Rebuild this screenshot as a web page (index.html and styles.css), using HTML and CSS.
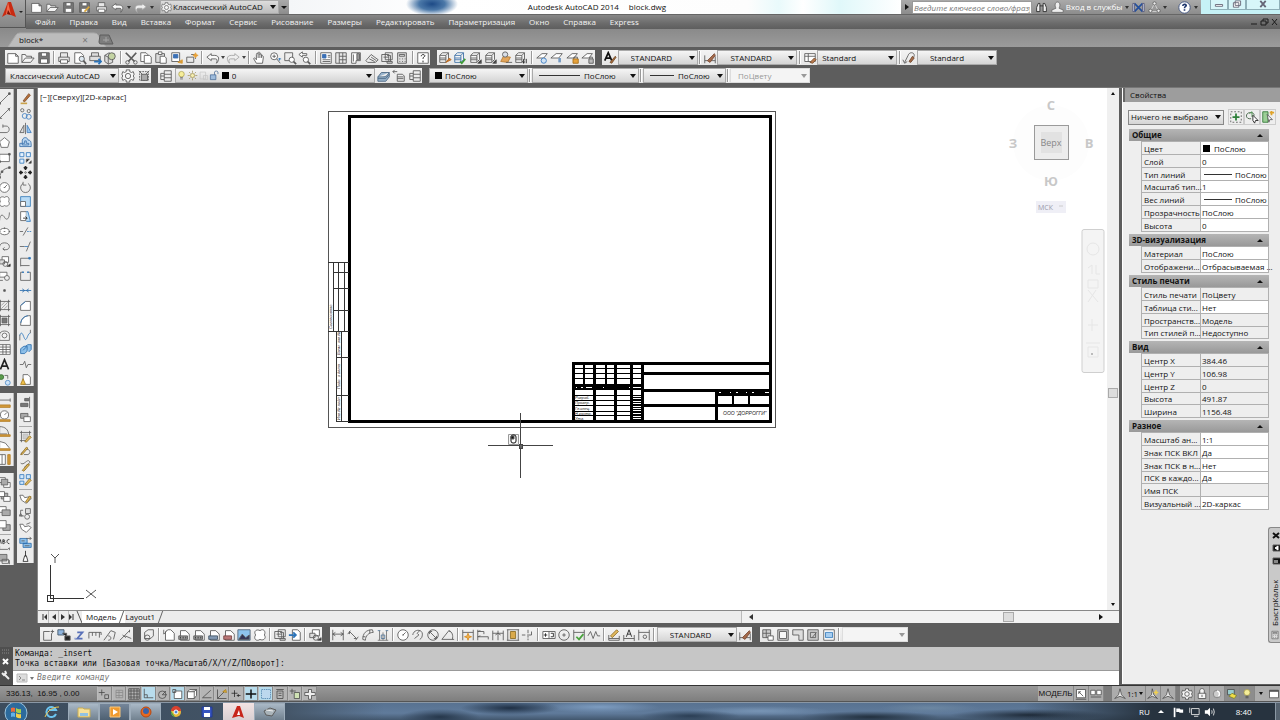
FILE: index.html
```html
<!DOCTYPE html>
<html lang="ru">
<head>
<meta charset="utf-8">
<title>Autodesk AutoCAD 2014 block.dwg</title>
<link rel="stylesheet" href="styles.css">
</head>
<body>
<svg class="sprite" aria-hidden="true">
<!-- files -->
<symbol id="new" viewBox="0 0 16 16"><path d="M2 3h9l3 3v8H2zM11 3v3h3" fill="#fff"/></symbol>
<symbol id="open" viewBox="0 0 16 16"><path d="M1 13V4h4l1 2h6v2M1 13l4-5h10l-4 5z" fill="#f4f4f4"/></symbol>
<symbol id="save" viewBox="0 0 16 16"><path d="M2 2h12v12H2z" fill="#777"/><path d="M5 2h6v4H5zM4 9h8v5H4z" fill="#fff"/></symbol>
<symbol id="saveas" viewBox="0 0 16 16"><path d="M2 2h12v12H2z" fill="#777"/><path d="M5 2h6v4H5zM4 9h8v5H4z" fill="#fff"/><path d="M8 13l6-6" stroke="#d9a63a" stroke-width="2"/></symbol>
<symbol id="print" viewBox="0 0 16 16"><path d="M4 7V2h8v5M2 7h12v5H2z" fill="#e8e8e8"/><path d="M4 10h8v4H4z" fill="#fff"/></symbol>
<symbol id="preview" viewBox="0 0 16 16"><path d="M9 14H2V2h7l3 3v2" fill="#fff"/><circle cx="10" cy="9" r="3" fill="#dde8f0"/><path d="M12 11l3 4" stroke-width="2"/></symbol>
<symbol id="publish" viewBox="0 0 16 16"><path d="M4 6V2h8v4M2 6h12v5H2z" fill="#ddd"/><path d="M7 12h7m-2-3l3 3-3 3" stroke="#2b73b8" stroke-width="2"/></symbol>
<symbol id="globe3d" viewBox="0 0 16 16"><path d="M2 5l5-3 4 3v8l-5 2-4-3z" fill="#ddd"/><circle cx="10" cy="6" r="4" fill="#c4d4a4"/><path d="M2 5l4 2v8"/></symbol>
<symbol id="cut" viewBox="0 0 16 16"><path d="M2 2l10 10M14 2L5 12" stroke-width="2"/><circle cx="4" cy="13" r="2"/><circle cx="13" cy="13" r="2"/></symbol>
<symbol id="copy" viewBox="0 0 16 16"><path d="M2 2h6l2 2v8H2z" fill="#fff"/><path d="M6 5h6l2 2v7H6z" fill="#fff"/></symbol>
<symbol id="paste" viewBox="0 0 16 16"><path d="M2 3h10v10H2z" fill="#ddd"/><path d="M5 1h4v3H5zM7 6h5l2 2v6H7z" fill="#fff"/></symbol>
<symbol id="match" viewBox="0 0 16 16"><path d="M2 2h9v10H2z" fill="#fff"/><path d="M4 4h5v4H4z" fill="#3b70b5" stroke="#3b70b5"/><path d="M9 13l5-3v4z" fill="#d99a33" stroke="#d99a33"/></symbol>
<symbol id="bedit" viewBox="0 0 16 16"><path d="M2 7h8v6H2zM7 4h5v5"/><path d="M12 2l1 2 2 1-2 1-1 2-1-2-2-1 2-1z" fill="#e8a23a" stroke="#e8a23a"/></symbol>
<symbol id="undo" viewBox="0 0 16 16"><path d="M6 3L1 7l5 4V9h5c2 0 2 2 1 5 4-4 3-9-2-9H6z" fill="#fafafa"/></symbol>
<symbol id="redo" viewBox="0 0 16 16"><path d="M10 3l5 4-5 4V9H5c-2 0-2 2-1 5-4-4-3-9 2-9h4z" fill="#eee" stroke="#a5a5a5"/></symbol>
<symbol id="hand" viewBox="0 0 16 16"><path d="M5 14L2 9c0-2 2-1 3 1V4c0-2 2-2 2 0V2c0-1 2-1 2 0v2c0-1 2-1 2 0v2c0-1 2-1 2 1l-1 7zM7 4v4m2-5v5m2-3v3" fill="#fff"/></symbol>
<symbol id="zoom" viewBox="0 0 16 16"><circle cx="7" cy="6" r="4" fill="#fff"/><path d="M5 6h4M7 4v4M10 9l4 5" /><path d="M12 9h3M13 8v3" stroke="#2b73b8"/></symbol>
<symbol id="zoomwin" viewBox="0 0 16 16"><path d="M2 2h9v7M2 2v9h5"/><circle cx="10" cy="10" r="3" fill="#fff"/><path d="M12 12l3 3" stroke-width="2"/></symbol>
<symbol id="zoomprev" viewBox="0 0 16 16"><path d="M5 1L1 4l4 3V5h5V3H5z" fill="#fff"/><circle cx="9" cy="10" r="3" fill="#fff"/><path d="M11 12l3 3" stroke-width="2"/></symbol>
<symbol id="props" viewBox="0 0 16 16"><path d="M2 2h12v12H2z" fill="#fff"/><path d="M4 4h4v4H4z" fill="#3b70b5" stroke="#3b70b5"/><path d="M10 5h3M10 7h3M4 10h9M4 12h9"/></symbol>
<symbol id="dc" viewBox="0 0 16 16"><path d="M2 2h12v12H2zM6 2v12M10 2v12M6 6h8M6 10h8" fill="#e6e6e6"/></symbol>
<symbol id="palette" viewBox="0 0 16 16"><path d="M3 2h10v9H8v3H3z" fill="#fff"/><path d="M9 3h3v7H9z" fill="#999"/><path d="M5 4v8"/></symbol>
<symbol id="sheet" viewBox="0 0 16 16"><path d="M1 11l6-7 8 6-3 3H3zM5 9l6 3M7 7l6 4" fill="#eee"/></symbol>
<symbol id="markup" viewBox="0 0 16 16"><path d="M2 4h8v8H2zM6 2h8v8H6zM4 7h6M8 5h4v7"/><path d="M8 12h6v2H8z" fill="#ccc"/></symbol>
<symbol id="calc" viewBox="0 0 16 16"><path d="M3 2h10v12H3z" fill="#ddd"/><path d="M5 4h6v2H5zM5 9h1m2 0h1m2 0h1M5 12h1m2 0h1m2 0h1"/></symbol>
<symbol id="help" viewBox="0 0 16 16"><path d="M2 2h12v12H2z" fill="#fff"/><path d="M6 6c0-3 5-2 4 0-1 1-2 1-2 3m0 2v2" stroke="#111"/></symbol>
<!-- layers -->
<symbol id="lay" viewBox="0 0 16 16"><path d="M2 5l3-3h7l-3 3zM2 5v8l7 0V5M2 8h7M2 10h7M9 13l3-3V2" fill="#f6f6f6"/></symbol>
<symbol id="laya" viewBox="0 0 16 16"><use href="#lay"/><path d="M9 13l4-5 2 2z" fill="#d37b2e" stroke="#b96b25"/></symbol>
<symbol id="layb" viewBox="0 0 16 16"><use href="#lay" stroke="#3d6fa6"/><path d="M8 12l2 2 4-5" stroke="#3d9b35" stroke-width="2"/></symbol>
<symbol id="layc" viewBox="0 0 16 16"><use href="#lay"/><path d="M10 14h4v-4zM14 14l-4-4" fill="#333"/></symbol>
<symbol id="layd" viewBox="0 0 16 16"><path d="M2 12l3-6 8 1-3 6z" fill="#e2a55b" stroke="#b67b32"/><circle cx="7" cy="4" r="3" fill="#d9dfe8"/><path d="M8 13h7"/></symbol>
<symbol id="laye" viewBox="0 0 16 16"><use href="#lay"/><path d="M11 9v5m3-5v5M10 12l1 2 1-2" stroke="#222"/></symbol>
<symbol id="layf" viewBox="0 0 16 16"><path d="M2 8l6-5h6l-4 5z" fill="#fff"/><circle cx="10" cy="11" r="3" stroke="#3c7cc0" fill="#cfe2f5"/></symbol>
<symbol id="layg" viewBox="0 0 16 16"><path d="M1 8l6-5h7l-4 5z" fill="#fff"/><path d="M11 8v5" stroke="#7499c2" stroke-width="3"/></symbol>
<symbol id="layh" viewBox="0 0 16 16"><path d="M1 8l6-5h6l-4 5z" fill="#fff"/><path d="M8 9h6v5H8z" fill="#e6a23b" stroke="#a86f1a"/><path d="M9 9V7h4v2"/></symbol>
<symbol id="layi" viewBox="0 0 16 16"><path d="M1 8l6-5h6l-4 5z" fill="#fff"/><path d="M9 9h5v5H9z" fill="#bbb"/><path d="M10 9V7h3v2"/></symbol>
<symbol id="layj" viewBox="0 0 16 16"><path d="M1 9l4-5h9l-4 5zM1 9v5h9l4-5V4M1 11h9l4-5" fill="#9bb6ce" stroke="#4a6783"/></symbol>
<symbol id="layk" viewBox="0 0 16 16"><path d="M1 3h5M1 3l2-2M1 3l2 2M6 6h6l2 2v6H6zM6 9h7M6 11h7"/></symbol>
<symbol id="laym" viewBox="0 0 16 16"><path d="M6 2h8v12H6zM6 6h8M6 10h8M2 5h4M2 5v7h4M2 8h4"/></symbol>
<symbol id="astyle" viewBox="0 0 16 16"><path d="M2 11L6 2l4 9M4 8h5" stroke="#111" stroke-width="2"/><path d="M8 13l6-7 1 1-5 7z" fill="#a7683a" stroke="#75512f"/></symbol>
<symbol id="dstyle" viewBox="0 0 16 16"><path d="M2 5v9m12-8v8M2 11h12" /><path d="M5 11l8-8 1 2-6 8z" fill="#a36a4b" stroke="#7c4b36"/></symbol>
<symbol id="tstyle" viewBox="0 0 16 16"><path d="M2 3h12v9H2zM2 6h12M6 3v9" fill="#fff"/><path d="M8 13l5-5 2 2-4 4z" fill="#b9794d" stroke="#7a5030"/></symbol>
<symbol id="mstyle" viewBox="0 0 16 16"><path d="M3 13L7 5c1-4 7-4 7 0 0 2-2 3-3 4M1 10l2 4 3-2"/><path d="M8 12l4-6 2 2-4 5z" fill="#a76c48" stroke="#6e4932"/></symbol>
<symbol id="gear" viewBox="0 0 16 16"><path d="M6 1h4v2l2 1 2-1 1 3-1 2 1 2-1 3-2-1-2 1v2H6v-2l-2-1-2 1-1-3 1-2-1-2 1-3 2 1 2-1z" fill="#f5f5f5"/><circle cx="8" cy="8" r="3"/></symbol>
<symbol id="wsave" viewBox="0 0 16 16"><path d="M3 3h10v10H3z" stroke-dasharray="2 1"/><path d="M5 6h7v7H5zM2 2l4 4m8-4l-4 4" fill="#aaa"/></symbol>
<symbol id="bulb" viewBox="0 0 16 16"><circle cx="8" cy="6" r="4" fill="#f6ee9a" stroke="#a89c4a"/><path d="M6 11h4M6 13h4"/></symbol>
<symbol id="sun" viewBox="0 0 16 16"><circle cx="8" cy="8" r="3" fill="#f5eeb0" stroke="#9c8c4e"/><path d="M8 1v3m0 8v3M1 8h3m8 0h3M3 3l2 2m6 6l2 2M3 13l2-2m6-6l2-2" stroke="#9c8c4e"/></symbol>
<symbol id="lpale" viewBox="0 0 16 16"><path d="M3 3h8v10H3zM8 8h6v6H8z" stroke="#c4c4c4"/></symbol>
<symbol id="unlock" viewBox="0 0 16 16"><path d="M2 7h8v7H2z" fill="#9dbbdc" stroke="#3e6390"/><path d="M8 7V3c0-2 5-2 5 0v3" stroke="#3e6390"/></symbol>
<!-- drawing -->
<symbol id="line" viewBox="0 0 16 16"><path d="M2 14L14 2"/><path d="M1 13h2v2H1zM13 1h2v2h-2z" fill="#555"/></symbol>
<symbol id="xline" viewBox="0 0 16 16"><path d="M1 15L15 1M12 2h2v3M2 11v3h3"/></symbol>
<symbol id="pline" viewBox="0 0 16 16"><path d="M2 13h8c5 0 5-8 0-8H6m0-2v4"/></symbol>
<symbol id="polygon" viewBox="0 0 16 16"><path d="M8 2l6 5-2 7H4L2 7z" fill="#fff"/></symbol>
<symbol id="rect" viewBox="0 0 16 16"><path d="M2 4h12v9H2z" fill="#fff"/><path d="M13 3h2v2h-2zM1 12h2v2H1z" fill="#555"/></symbol>
<symbol id="arc" viewBox="0 0 16 16"><path d="M2 14C3 7 7 3 14 2"/><path d="M1 13h2v2H1zM4 6h2v2H4zM13 1h2v2h-2z" fill="#555"/></symbol>
<symbol id="circle" viewBox="0 0 16 16"><circle cx="8" cy="8" r="6" fill="#fff"/><path d="M8 8l3-3M7 8h2"/></symbol>
<symbol id="cloud" viewBox="0 0 16 16"><path d="M3 8C0 3 5 1 8 3c4-3 7 1 5 5 3 4-2 7-5 5-4 3-8-1-5-5z" fill="#fff"/></symbol>
<symbol id="spline" viewBox="0 0 16 16"><path d="M2 13c0-8 4-8 6-4s6 3 6-6"/></symbol>
<symbol id="ellipse" viewBox="0 0 16 16"><ellipse cx="8" cy="8" rx="6" ry="4" fill="#fff"/><path d="M8 3v2M7 8h2M1 8h2m10 0h2"/></symbol>
<symbol id="ellarc" viewBox="0 0 16 16"><path d="M2 8c0-6 12-6 12 0 0 4-5 5-8 3l2-2m-2 2l2 2"/></symbol>
<symbol id="insert" viewBox="0 0 16 16"><path d="M5 2h8v7H5z" fill="#fff"/><path d="M2 6h6v5H2z" fill="#ddd"/><circle cx="9" cy="11" r="3"/><path d="M11 14h4v-3z" fill="#222"/></symbol>
<symbol id="block" viewBox="0 0 16 16"><path d="M2 4h9v6H2z" fill="#fff"/><circle cx="11" cy="11" r="3" fill="#eee"/><path d="M2 14h4"/></symbol>
<symbol id="point" viewBox="0 0 16 16"><path d="M7 7h2v2H7z" fill="#555"/></symbol>
<symbol id="hatch" viewBox="0 0 16 16"><path d="M3 1v14M13 1v14M1 3h14M1 13h14"/><path d="M4 8l4-4M4 12l8-8M8 12l4-4" stroke="#999"/></symbol>
<symbol id="gradient" viewBox="0 0 16 16"><path d="M3 1v14M13 1v14M1 3h14M1 13h14"/><path d="M5 5h6v6H5z" fill="#777"/></symbol>
<symbol id="region" viewBox="0 0 16 16"><path d="M2 14V7c0-6 12-6 12 0v7z" fill="#f5f5f5"/><circle cx="8" cy="8" r="3"/></symbol>
<symbol id="table" viewBox="0 0 16 16"><path d="M1 2h14v12H1zM1 5h14M1 8h14M1 11h14M6 2v12M10 2v12" fill="#fff"/></symbol>
<symbol id="mtext" viewBox="0 0 16 16"><path d="M3 14L8 2l5 12M5 10h6" stroke="#222" stroke-width="2"/></symbol>
<symbol id="addsel" viewBox="0 0 16 16"><circle cx="4" cy="5" r="3" fill="#5a9a4c" stroke="#336b2c"/><circle cx="12" cy="12" r="3" stroke="#4a88c6" fill="#cfe3f6"/><path d="M8 3h4v4"/></symbol>
<!-- editing -->
<symbol id="erase" viewBox="0 0 16 16"><path d="M5 11l7-9 2 2-7 8z" fill="#b56f3b" stroke="#80502c"/><path d="M2 14h8" stroke="#c9a24b" stroke-width="2"/></symbol>
<symbol id="mcopy" viewBox="0 0 16 16"><circle cx="4" cy="4" r="2"/><circle cx="12" cy="5" r="2"/><circle cx="7" cy="11" r="3" stroke="#3c7cc0"/><circle cx="12" cy="12" r="3" stroke="#3c7cc0"/></symbol>
<symbol id="mirror" viewBox="0 0 16 16"><path d="M6 4v9H1z" fill="#ddd"/><path d="M10 4v9h5z" fill="#9cc6ec" stroke="#3c7cc0"/><path d="M8 1v14"/></symbol>
<symbol id="offset" viewBox="0 0 16 16"><path d="M1 13V9h3V5c2-5 7-3 7 0 4 0 4 3 4 8zM4 11V9h3V6h2v3h3v2z" fill="#bcd8f2" stroke="#356ca8"/></symbol>
<symbol id="array" viewBox="0 0 16 16"><path d="M1 2h5v5H1zM9 2h5v5H9zM1 10h5v5H1z" stroke="#2f78bd" fill="#e5f2ff"/><path d="M9 14v-4h4M12 15h3v-3z" fill="#222"/></symbol>
<symbol id="move" viewBox="0 0 16 16"><path d="M8 1v4m0 6v4M1 8h4m6 0h4M6 3l2-2 2 2M6 13l2 2 2-2M3 6L1 8l2 2m10-4l2 2-2 2" stroke="#222" stroke-width="2"/><circle cx="8" cy="8" r="1"/></symbol>
<symbol id="rotate" viewBox="0 0 16 16"><path d="M5 3a6 6 0 1 0 6 0M5 1v4h4" /></symbol>
<symbol id="scale" viewBox="0 0 16 16"><path d="M2 2h12v12H2z" fill="#b8dbf5" stroke="#347ab8"/><path d="M2 8h6v6H2z" fill="#fff"/></symbol>
<symbol id="stretch" viewBox="0 0 16 16"><path d="M2 2h7v11H2z" fill="#fff"/><path d="M9 2h2l3 12H9" stroke="#2f78bd" fill="#bcdcf4"/><path d="M5 10h5M8 8l2 2-2 2" stroke="#222"/></symbol>
<symbol id="trim" viewBox="0 0 16 16"><path d="M1 8h4M11 3L5 13"/><path d="M10 8h5" stroke-dasharray="2 1" stroke="#2f78bd"/></symbol>
<symbol id="extend" viewBox="0 0 16 16"><path d="M1 8h6M14 2L9 14"/><path d="M7 8h4" stroke="#2f78bd"/></symbol>
<symbol id="breakpt" viewBox="0 0 16 16"><path d="M2 14V4h11M2 13h11"/><path d="M12 3h2v2h-2z" fill="#2f78bd" stroke="#2f78bd"/></symbol>
<symbol id="break" viewBox="0 0 16 16"><path d="M5 4H2v10h12V4h-3"/><path d="M5 3v2m6-2v2" stroke="#2f78bd" stroke-width="2"/></symbol>
<symbol id="join" viewBox="0 0 16 16"><path d="M1 8h14M4 6l3 2-3 2m8-4L9 8l3 2" stroke="#2a6dad"/></symbol>
<symbol id="chamfer" viewBox="0 0 16 16"><path d="M2 14V8l6-5h6v11z" fill="#fff"/><path d="M2 8l6-5" stroke="#2f78bd"/></symbol>
<symbol id="fillet" viewBox="0 0 16 16"><path d="M2 14C2 6 6 2 14 2v12z" fill="#fff"/><path d="M2 11C3 6 6 3 11 2" stroke="#2f78bd"/></symbol>
<symbol id="blend" viewBox="0 0 16 16"><path d="M1 14V7"/><path d="M1 8c3-9 5 5 7 5s3-8 6-8" stroke="#2f78bd"/><path d="M14 5V1"/></symbol>
<symbol id="explode" viewBox="0 0 16 16"><path d="M2 7l4-3h4v6l-3 3H2zM8 4l3-2h4v6l-3 3M5 9l4-4" fill="#8dbfe8" stroke="#2a6dad"/></symbol>
<symbol id="wave" viewBox="0 0 16 16"><path d="M1 8h4l2-4 2 8 2-4h4"/></symbol>
<symbol id="ncopy" viewBox="0 0 16 16"><path d="M5 2h6l3 3v9H5z" fill="#fff"/><path d="M2 14l3-7 3 7z" fill="#f0c34c" stroke="#a77b1c"/></symbol>
<!-- inquiry and order -->
<symbol id="dist" viewBox="0 0 16 16"><path d="M1 5h14M1 3v4m14-4v4"/><path d="M1 11h14v3H1z" fill="#d49b3a" stroke="#b27d25"/></symbol>
<symbol id="rad" viewBox="0 0 16 16"><circle cx="8" cy="6" r="5" fill="#fff"/><path d="M8 6l3-3"/><path d="M1 12h14v2H1z" fill="#d49b3a" stroke="#b27d25"/></symbol>
<symbol id="ang" viewBox="0 0 16 16"><path d="M2 2c7 0 11 4 11 10M2 2v9l9 0"/><path d="M1 12h14v2H1z" fill="#d49b3a" stroke="#b27d25"/></symbol>
<symbol id="area" viewBox="0 0 16 16"><path d="M2 11V3l7 2 5 6" fill="#fff"/><path d="M1 12h14v2H1z" fill="#d49b3a" stroke="#b27d25"/></symbol>
<symbol id="vol" viewBox="0 0 16 16"><path d="M1 2h8v12H1zM5 2v12" fill="#fff"/><path d="M12 2h3v12h-3z" fill="#d49b3a" stroke="#b27d25"/></symbol>
<symbol id="front" viewBox="0 0 16 16"><path d="M1 2h8v6H1zM7 8h8v6H7z" fill="#fff"/><path d="M4 4h8v7H4z" fill="#aaa"/></symbol>
<symbol id="back" viewBox="0 0 16 16"><path d="M4 4h8v7H4z" fill="#aaa"/><path d="M1 2h7v6H1zM7 8h8v6H7z" fill="#fff"/></symbol>
<symbol id="above" viewBox="0 0 16 16"><path d="M1 2h9v7H1z" fill="#fff"/><path d="M5 6h10v7H5z" fill="#aaa"/></symbol>
<symbol id="under" viewBox="0 0 16 16"><path d="M6 7h9v7H6z" fill="#aaa"/><path d="M1 2h9v9H1z" fill="#fff"/></symbol>
<symbol id="abc" viewBox="0 0 16 16"><path d="M1 7l2-5 1 5M6 7V2c3 0 3 2 0 2 4 0 3 3 0 3M14 2c-4-1-4 5 0 5" stroke="#222"/><path d="M2 10v4h10l2-2v3"/></symbol>
<symbol id="hback" viewBox="0 0 16 16"><path d="M1 3h10v8H1z" fill="#aaa"/><path d="M5 9h8v5H5zM14 10v5"/></symbol>
<symbol id="align" viewBox="0 0 16 16"><path d="M13 1v14"/><path d="M2 9h9v4H2zM7 3h5v3H7z" fill="#777"/></symbol>
<symbol id="over" viewBox="0 0 16 16"><path d="M2 3h9v6H2z" fill="#aaa"/><path d="M6 7h8v6H6z" fill="#fff"/></symbol>
<symbol id="ehatch" viewBox="0 0 16 16"><path d="M3 1v14M13 1v5M1 3h14M1 13h7" /><path d="M5 5h6v6H5z" fill="#ccc" stroke="#bbb"/><path d="M7 14l6-7 2 2-6 6z" fill="#e5bb5a" stroke="#8d6d25"/></symbol>
<symbol id="epl" viewBox="0 0 16 16"><path d="M2 12l6-5c6-2 7 5 3 6H6" /><path d="M2 13l7-9 2 1-7 8z" fill="#e5bb5a" stroke="#8d6d25"/></symbol>
<symbol id="espl" viewBox="0 0 16 16"><path d="M2 5c4 4 8-6 11-2 2 4-9 4-5 10"/><path d="M4 14l7-8 2 1-7 8z" fill="#e5bb5a" stroke="#8d6d25"/></symbol>
<symbol id="earr" viewBox="0 0 16 16"><path d="M1 2h5v5H1zM9 2h5v5H9zM1 10h5v4H1z" stroke="#2f78bd" fill="#d3e8fb"/><path d="M7 14l6-7 2 2-6 6z" fill="#e5bb5a" stroke="#8d6d25"/></symbol>
<symbol id="att1" viewBox="0 0 16 16"><path d="M1 4h4l2 3 5-1 3 2-6 6-6-4z" fill="#fff"/><path d="M8 12l5-7 2 1-5 7z" fill="#e5bb5a" stroke="#8d6d25"/></symbol>
<symbol id="att2" viewBox="0 0 16 16"><path d="M8 2h6v6H8z" fill="#ddd"/><circle cx="10" cy="12" r="3"/><path d="M5 4H2v7h4M2 8L0 11h4z"/></symbol>
<symbol id="att3" viewBox="0 0 16 16"><path d="M1 4h4l2 3 5-1 3 2-6 6-6-4zM9 4l5-2" fill="#fff"/></symbol>
<symbol id="att4" viewBox="0 0 16 16"><path d="M1 3h9v6H1zM5 9h10v5H5z" fill="#8dbfe8" stroke="#2a6dad"/><path d="M9 3h6m-2-2l2 2-2 2M3 6h4M7 12h6"/></symbol>
<symbol id="brush" viewBox="0 0 16 16"><path d="M8 1v7M5 14l2-7h2l2 7z" stroke="#222" fill="#fff"/></symbol>
<!-- reference -->
<symbol id="ucsb" viewBox="0 0 16 16"><path d="M3 4h7M12 6v8H3V4"/><path d="M11 4h4M13 2v4"/></symbol>
<symbol id="layerp" viewBox="0 0 16 16"><path d="M1 2h7v6H1z" fill="#8fb4dd" stroke="#456"/><path d="M6 6h5v4M9 9h6v5H9z" fill="#222"/></symbol>
<symbol id="ptz" viewBox="0 0 16 16"><path d="M6 5h6l-6 7h6M3 12h1" stroke="#5870b8" stroke-width="2"/></symbol>
<symbol id="rule" viewBox="0 0 16 16"><path d="M1 12V5h14v3M5 5v4m4-4v4m4-4v6"/></symbol>
<symbol id="dima" viewBox="0 0 16 16"><path d="M1 14L9 3l5 2-2 8M6 9c4 0 4 5 0 5"/></symbol>
<symbol id="dimb" viewBox="0 0 16 16"><path d="M1 14L12 3M12 2v3m-5 4l7 3M4 8l4 3"/></symbol>
<symbol id="refins" viewBox="0 0 16 16"><path d="M3 5l4-3h6v7l-3 3H3z" fill="#eee"/><circle cx="6" cy="11" r="3"/></symbol>
<symbol id="sheetp" viewBox="0 0 16 16"><path d="M4 14V4l3-2h3l4 4v8zM2 2v5l3-3" fill="#fff"/></symbol>
<symbol id="pdwf" viewBox="0 0 16 16"><path d="M4 14V3h6l4 4v7z" fill="#fff"/><path d="M2 9h10v4H2z" fill="#999"/><path d="M4 10v2m3-2v2m3-2v2" stroke="#333"/></symbol>
<symbol id="ppdf" viewBox="0 0 16 16"><path d="M4 14V3h6l4 4v7z" fill="#fff"/><path d="M2 9h9v4H2z" fill="#b77" stroke="#744"/></symbol>
<symbol id="pdgn" viewBox="0 0 16 16"><path d="M4 14V3h6l4 4v7z" fill="#fff"/><path d="M2 9h10v4H2z" fill="#8299b3" stroke="#456"/></symbol>
<symbol id="image" viewBox="0 0 16 16"><path d="M1 2h14v12H1z" fill="#8ec3ec" stroke="#567"/><path d="M2 13l4-6 4 4 4-3v5z" fill="#335"/></symbol>
<symbol id="export" viewBox="0 0 16 16"><path d="M5 2h6l3 3v9H5z" fill="#fff"/><path d="M1 8h7M6 5l3 3-3 3" stroke="#2b73b8" stroke-width="2"/></symbol>
<!-- dimensions -->
<symbol id="dlin" viewBox="0 0 16 16"><path d="M2 2v12M14 2v12M2 7h12M5 5L2 7l3 2m6-4l3 2-3 2"/></symbol>
<symbol id="dali" viewBox="0 0 16 16"><path d="M2 7l3-4M11 14l3-4M4 4l8 8M4 4v3m8 5H9"/></symbol>
<symbol id="darc" viewBox="0 0 16 16"><path d="M2 13C2 6 6 2 13 2l1 3C9 5 5 9 5 14zM2 10h3m5-8v4"/></symbol>
<symbol id="dord" viewBox="0 0 16 16"><path d="M2 14h12M4 3v11M8 5v9M12 3v11" stroke="#777"/><path d="M6 8h4v4H6zM2 3h3m6 0h3" stroke="#579"/></symbol>
<symbol id="djog" viewBox="0 0 16 16"><path d="M2 8C3 1 13 1 13 7c0 3-1 5-3 6M4 12l5-4-2-2 3-3"/></symbol>
<symbol id="ddia" viewBox="0 0 16 16"><circle cx="8" cy="8" r="6"/><path d="M4 4l8 8M4 7V4h3m5 5v3H9"/></symbol>
<symbol id="dang" viewBox="0 0 16 16"><path d="M1 13h14M1 13L9 3c4 1 5 6 4 10M9 3l2 2"/></symbol>
<symbol id="dqk" viewBox="0 0 16 16"><path d="M2 2v12M14 2v12M2 5h12"/><path d="M8 6l1 3 3 1-3 1-1 3-1-3-3-1 3-1z" fill="#f1b24c" stroke="#d68c22"/></symbol>
<symbol id="dbas" viewBox="0 0 16 16"><path d="M2 2v12M2 4h7v3M2 10h12v3M5 3L2 4m3 5l-3 1"/></symbol>
<symbol id="dcon" viewBox="0 0 16 16"><path d="M2 3v11M8 3v11M14 3v11M2 6h12M5 8l3-2 3 2"/></symbol>
<symbol id="dspc" viewBox="0 0 16 16"><path d="M1 2h14M1 14h14M2 2v12M14 2v12"/><path d="M5 4h6v8H5z" fill="#d9a94a" stroke="#8c6b22"/></symbol>
<symbol id="dbrk" viewBox="0 0 16 16"><path d="M1 8h5m3 0h3M8 2v12M12 4v4" stroke-dasharray="4 1"/></symbol>
<symbol id="tol" viewBox="0 0 16 16"><path d="M1 4h14v8H1zM8 4v8" fill="#fff"/><path d="M4 6v4M2 8h4M10 6h3v4h-3" stroke="#222"/></symbol>
<symbol id="cen" viewBox="0 0 16 16"><circle cx="8" cy="8" r="6"/><path d="M8 6v4M6 8h4"/></symbol>
<symbol id="insp" viewBox="0 0 16 16"><path d="M2 2v12M14 2v12M2 5h12"/><path d="M5 10l3 3 5-6" stroke="#48a33c" stroke-width="2"/></symbol>
<symbol id="djl" viewBox="0 0 16 16"><path d="M1 9l3-5 3 8 3-8 2 5h3"/></symbol>
<symbol id="ded" viewBox="0 0 16 16"><path d="M2 8v6h12V9M2 12h12"/><path d="M4 9l7-7 2 2-7 7z" fill="#e2b95d" stroke="#8d6d25"/></symbol>
<symbol id="dte" viewBox="0 0 16 16"><path d="M2 8v7M14 8v7M2 12h12"/><path d="M5 10l3-8 3 8M6 7h4" stroke="#222"/></symbol>
<symbol id="dup" viewBox="0 0 16 16"><path d="M2 2v12M14 2v12M2 5h12"/><circle cx="9" cy="10" r="2"/></symbol>
<symbol id="vpa" viewBox="0 0 16 16"><path d="M2 2h9v9H2zM2 6h9M6 2v9" fill="#ccc"/><path d="M8 9h6v5H8z" fill="#fff"/></symbol>
<symbol id="vpb" viewBox="0 0 16 16"><path d="M2 2h12v12H2z" fill="#ccc"/><path d="M4 4h8v8H4z" fill="#f7f7f7"/></symbol>
<symbol id="vpc" viewBox="0 0 16 16"><path d="M2 2h12v12H9V8H2z" fill="#ddd"/></symbol>
<symbol id="vpd" viewBox="0 0 16 16"><path d="M2 2h12v12H2zM5 5h6v6H5z" fill="#ccc"/><path d="M7 11l5-6"/></symbol>
<symbol id="vpe" viewBox="0 0 16 16"><path d="M2 2h12v12H2z" fill="#fff"/><path d="M4 5h8v6H4z" fill="#a6cdf0" stroke="#3b7fbd"/></symbol>
<!-- status -->
<symbol id="s1" viewBox="0 0 16 16"><path d="M5 2v8M1 6h8M9 9h5v5H9z"/></symbol>
<symbol id="s2" viewBox="0 0 16 16"><path d="M4 3h9v10H4zM4 6h9M4 10h9M8 3v10" stroke="#888"/></symbol>
<symbol id="s3" viewBox="0 0 16 16"><path d="M1 1h14v14H1zM4 1v14M8 1v14M12 1v14M1 4h14M1 8h14M1 12h14"/></symbol>
<symbol id="s4" viewBox="0 0 16 16"><path d="M3 1v12h12M3 9h4v4"/></symbol>
<symbol id="s5" viewBox="0 0 16 16"><circle cx="7" cy="9" r="5"/><path d="M7 9h6M7 9l5-5"/></symbol>
<symbol id="s6" viewBox="0 0 16 16"><path d="M3 4h10v10H3z" fill="#fff"/><path d="M1 2h4v4H1z"/></symbol>
<symbol id="s7" viewBox="0 0 16 16"><path d="M2 5l3-3h9v8l-3 4H2zM2 5h9l3-3M11 5v9" fill="#fff"/></symbol>
<symbol id="s8" viewBox="0 0 16 16"><path d="M13 3L2 13h12"/></symbol>
<symbol id="s9" viewBox="0 0 16 16"><path d="M2 2v12h12M2 14l9-9"/><path d="M9 5l4-3 1 4z" fill="#e0b03b" stroke="#a87e1c"/></symbol>
<symbol id="s10" viewBox="0 0 16 16"><path d="M6 3v9M2 7h8M9 10h5M11 8v4" stroke="#222"/></symbol>
<symbol id="s11" viewBox="0 0 16 16"><path d="M8 2v12M1 8h14" stroke="#111" stroke-width="2"/></symbol>
<symbol id="s12" viewBox="0 0 16 16"><path d="M2 2h12v12H2z" fill="#bcd8ee" stroke="#4a7eaa" stroke-dasharray="2 1"/></symbol>
<symbol id="s13" viewBox="0 0 16 16"><path d="M4 4h8v10H4zM3 2h10M6 7h4M6 10h4"/></symbol>
<symbol id="s14" viewBox="0 0 16 16"><path d="M4 1v7M1 4h8"/><path d="M7 6h7v8H7z" fill="#cfe2b4"/></symbol>
<symbol id="s15" viewBox="0 0 16 16"><path d="M6 2h4v4h5v4h-5v5H6v-5H1V6h5z" fill="#eee"/></symbol>
<symbol id="m1" viewBox="0 0 16 16"><path d="M2 2h12v11H2zM5 5l6 6M5 5v3m0-3h3M1 15h14" fill="#fff"/></symbol>
<symbol id="m2" viewBox="0 0 16 16"><path d="M1 3h6v6H1zM9 3h6v6H9zM1 12h14" fill="#fff"/></symbol>
<symbol id="ann" viewBox="0 0 16 16"><path d="M8 1l2 8 5 5-7-3-7 3 5-5z" fill="#eee"/></symbol>
<symbol id="annl" viewBox="0 0 16 16"><path d="M7 1l2 8 5 5-7-3-6 3 5-5z" fill="#eee"/><path d="M12 3v6M9 6h6" stroke="#f1d04c" stroke-width="2"/></symbol>
<symbol id="lock" viewBox="0 0 16 16"><path d="M3 7h10v7H3zM5 7V3c1-3 5-3 6 0v4M8 9v3" fill="#f4f4f4"/></symbol>
<symbol id="ball" viewBox="0 0 16 16"><circle cx="8" cy="8" r="5" fill="#ccc" stroke="#777"/><path d="M8 4a4 4 0 0 1 2 7" stroke="#fff" stroke-width="2"/></symbol>
<symbol id="perf" viewBox="0 0 16 16"><path d="M2 2h9v7H2z" fill="#9cc"/><path d="M4 11l4-4 6 3-3 4z" fill="#f0dc48" stroke="#777d24"/></symbol>
<symbol id="win" viewBox="0 0 16 16"><path d="M2 3h12v10H2z" fill="#fff"/><path d="M2 4h12" stroke-width="2"/></symbol>
<symbol id="bino" viewBox="0 0 16 16"><path d="M2 13V8l2-5h2v10zM10 13V3h2l2 5v5zM6 6h4" fill="#eee" stroke="#222"/></symbol>
<symbol id="user" viewBox="0 0 16 16"><path d="M5 5c0-5 6-5 6 0 0 2-1 3-1 4l5 2v3H1v-3l5-2c0-1-1-2-1-4z" fill="#eee" stroke="#666"/></symbol>
<symbol id="exch" viewBox="0 0 16 16"><path d="M3 3l10 10M13 3L3 13" stroke="#234f9c" stroke-width="2"/><path d="M1 3h2v10H1zM13 3h2v10h-2z" fill="#c7d4e8" stroke="#557"/></symbol>
<symbol id="a360" viewBox="0 0 16 16"><path d="M8 3L3 13h10z" stroke="#ddd"/><circle cx="8" cy="3" r="2" fill="#eee"/><circle cx="3" cy="12" r="2" fill="#eee"/><circle cx="13" cy="12" r="2" fill="#eee"/></symbol>
<symbol id="qm" viewBox="0 0 16 16"><circle cx="8" cy="8" r="7" fill="#fff" stroke="#33477a"/><path d="M6 6c0-3 5-2 4 0-1 1-2 1-2 3m0 1v2" stroke="#22396e" stroke-width="2"/></symbol>
<symbol id="selp" viewBox="0 0 16 16"><path d="M2 2h12v12H2z" stroke-dasharray="2 2"/><path d="M8 4v8M4 8h8" stroke="#2d7f3a" stroke-width="2"/></symbol>
<symbol id="selo" viewBox="0 0 16 16"><path d="M7 10c-7 1-7-7-1-7 4 0 5 2 4 4" stroke="#3f5f44"/><path d="M5 4l3-2v6" stroke="#4a944d"/><path d="M9 6l6 6-3 0-1 3-2-3z" fill="#fff" stroke="#222"/></symbol>
<symbol id="selq" viewBox="0 0 16 16"><path d="M2 2h6v12H2z" fill="#9ccf96" stroke="#357a3a"/><path d="M7 5l6 6h-3l-1 3z" fill="#fff"/><path d="M12 1v5M10 3h5" stroke="#dfa32a" stroke-width="2"/></symbol>
</svg>

<div class="app">
<header class="head">
  <button class="logo" aria-label="Меню приложения"><svg viewBox="0 0 26 28"><path d="M2 17L8 2l3 0 5 15-5-2-4-1z" fill="#c92b12" stroke="none"/><path d="M8 2l-2 12 5 1z" fill="#f4694a" stroke="none"/><path d="M8 10l3 5-4-1z" fill="#7c1408" stroke="none"/><path d="M19 11h4l-2 2z" fill="#222" stroke="none"/></svg></button>
  <div class="headrows">
    <div class="title">
      <div class="quick">
        <button aria-label="Создать"><svg><use href="#new"/></svg></button><button aria-label="Открыть"><svg><use href="#open"/></svg></button><button aria-label="Сохранить"><svg><use href="#save"/></svg></button><button aria-label="Сохранить как"><svg><use href="#saveas"/></svg></button><button aria-label="Печать"><svg><use href="#print"/></svg></button><button aria-label="Отменить"><svg><use href="#undo"/></svg></button><i class="dn"></i><button aria-label="Повторить"><svg><use href="#redo"/></svg></button><i class="dn"></i>
      </div>
      <label class="combo wspace"><svg><use href="#gear"/></svg><select aria-label="Рабочее пространство"><option>Классический AutoCAD</option></select></label>
      <i class="dn more"></i>
      <div class="caption"><span>Autodesk AutoCAD 2014</span><span>block.dwg</span></div>
      <i class="rt"></i>
      <input class="search" aria-label="Поиск" placeholder="Введите ключевое слово/фразу">
      <div class="service">
        <button aria-label="Найти"><svg><use href="#bino"/></svg></button><button class="login"><svg><use href="#user"/></svg>Вход в службы</button><i class="dn"></i><button aria-label="Exchange"><svg><use href="#exch"/></svg></button><button aria-label="Связь"><svg><use href="#a360"/></svg></button><i class="dn"></i><button class="qhelp" aria-label="Справка"><svg><use href="#qm"/></svg></button><i class="dn"></i>
      </div>
      <div class="winbtn"><button aria-label="Свернуть"><svg viewBox="0 0 12 10"><path d="M2 5h8v2H2z" fill="#fff"/></svg></button><button aria-label="Развернуть"><svg viewBox="0 0 12 10"><path d="M4 1h6v5H4zM2 3h6v5H2z" fill="#fff"/></svg></button><button aria-label="Закрыть" class="wide"><svg viewBox="0 0 12 10"><path d="M3 1l6 7M9 1L3 8" stroke-width="2"/></svg></button></div>
    </div>
    <nav class="menu">
      <button>Файл</button><button>Правка</button><button>Вид</button><button>Вставка</button><button>Формат</button><button>Сервис</button><button>Рисование</button><button>Размеры</button><button>Редактировать</button><button>Параметризация</button><button>Окно</button><button>Справка</button><button>Express</button>
      <svg class="mdi" viewBox="0 0 28 10"><path d="M1 7h6M11 4h5v4h-5zM13 4V2h5v4h-2M22 2l5 6M27 2l-5 6" stroke="#1c1c1c"/></svg>
    </nav>
  </div>
</header>

<div class="tabs">
  <svg class="tabshape" viewBox="0 0 110 15" preserveAspectRatio="none"><path d="M0 15L8 3Q9 1 12 1H86Q89 1 90 3L98 15z" fill="#bcbcbc" stroke="#aaa"/></svg>
  <button class="tab">block*<b>×</b></button>
  <button class="plus" aria-label="Новая вкладка"><svg viewBox="0 0 16 12"><path d="M2 1h9l4 9H3Q1 10 1 8z" fill="#7d7d7d"/><path d="M8 3v5M5 6h6" stroke="#a5a5a5"/></svg></button>
</div>

<div class="bars">
  <div class="barrow">
    <div class="strip w425">
      <button aria-label="Создать"><svg><use href="#new"/></svg></button><button aria-label="Открыть"><svg><use href="#open"/></svg></button><button aria-label="Сохранить"><svg><use href="#save"/></svg></button><hr><button aria-label="Печать"><svg><use href="#print"/></svg></button><button aria-label="Просмотр"><svg><use href="#preview"/></svg></button><button aria-label="Публикация"><svg><use href="#publish"/></svg></button><button aria-label="3D DWF"><svg><use href="#globe3d"/></svg></button><hr><button aria-label="Вырезать"><svg><use href="#cut"/></svg></button><button aria-label="Копировать"><svg><use href="#copy"/></svg></button><button aria-label="Вставить"><svg><use href="#paste"/></svg></button><button aria-label="Копия свойств"><svg><use href="#match"/></svg></button><button aria-label="Редактор блоков"><svg><use href="#bedit"/></svg></button><hr><button aria-label="Отменить"><svg><use href="#undo"/></svg></button><i class="dn"></i><button aria-label="Повторить"><svg><use href="#redo"/></svg></button><i class="dn"></i><hr><button aria-label="Панорамирование"><svg><use href="#hand"/></svg></button><button aria-label="Зумирование"><svg><use href="#zoom"/></svg></button><button aria-label="Рамка"><svg><use href="#zoomwin"/></svg></button><button aria-label="Предыдущее"><svg><use href="#zoomprev"/></svg></button><hr><button aria-label="Свойства"><svg><use href="#props"/></svg></button><button aria-label="Центр управления"><svg><use href="#dc"/></svg></button><button aria-label="Палитры"><svg><use href="#palette"/></svg></button><button aria-label="Подшивки"><svg><use href="#sheet"/></svg></button><button aria-label="Пометки"><svg><use href="#markup"/></svg></button><button aria-label="Калькулятор"><svg><use href="#calc"/></svg></button><hr><button aria-label="Справка"><svg><use href="#help"/></svg></button>
    </div>
    <div class="strip w158">
      <button aria-label="Слой 1"><svg><use href="#laya"/></svg></button><button aria-label="Слой 2"><svg><use href="#layb"/></svg></button><button aria-label="Слой 3"><svg><use href="#layc"/></svg></button><button aria-label="Слой 4"><svg><use href="#layc"/></svg></button><button aria-label="Слой 5"><svg><use href="#layd"/></svg></button><button aria-label="Слой 6"><svg><use href="#laye"/></svg></button><hr><button aria-label="Заморозить"><svg><use href="#layf"/></svg></button><button aria-label="Отключить"><svg><use href="#layg"/></svg></button><button aria-label="Блокировать"><svg><use href="#layh"/></svg></button><button aria-label="Разблокировать"><svg><use href="#layi"/></svg></button>
    </div>
    <div class="strip w395">
      <button aria-label="Текстовый стиль"><svg><use href="#astyle"/></svg></button><label class="combo w80 ind"><select aria-label="Стиль текста"><option>STANDARD</option></select></label><hr>
      <button aria-label="Размерный стиль"><svg><use href="#dstyle"/></svg></button><label class="combo w80 ind"><select aria-label="Стиль размера"><option>STANDARD</option></select></label><hr>
      <button aria-label="Стиль таблиц"><svg><use href="#tstyle"/></svg></button><label class="combo w80"><select aria-label="Стиль таблицы"><option>Standard</option></select></label><hr>
      <button aria-label="Стиль мультивыносок"><svg><use href="#mstyle"/></svg></button><label class="combo w80 ind"><select aria-label="Стиль выноски"><option>Standard</option></select></label>
    </div>
  </div>
  <div class="barrow">
    <div class="strip w146">
      <label class="combo w114"><select aria-label="Пространство"><option>Классический AutoCAD</option></select></label><button aria-label="Параметры"><svg><use href="#gear"/></svg></button><button aria-label="Мое пространство"><svg><use href="#wsave"/></svg></button>
    </div>
    <div class="strip w264">
      <button aria-label="Слои"><svg><use href="#laym"/></svg></button><label class="combo w200"><svg><use href="#bulb"/></svg><svg><use href="#sun"/></svg><svg><use href="#lpale"/></svg><svg><use href="#unlock"/></svg><i class="sw"></i><select aria-label="Слой"><option>0</option></select></label><button aria-label="Текущий"><svg><use href="#layj"/></svg></button><button aria-label="Предыдущий"><svg><use href="#layk"/></svg></button><button aria-label="Состояния"><svg><use href="#laym"/></svg></button>
    </div>
    <div class="strip">
      <label class="combo w100"><i class="sw"></i><select aria-label="Цвет"><option>ПоСлою</option></select></label><hr>
      <label class="combo w107"><i class="ln l40"></i><select aria-label="Тип линий"><option>ПоСлою</option></select></label><hr>
      <label class="combo w83"><i class="ln l24"></i><select aria-label="Вес линий"><option>ПоСлою</option></select></label><hr>
      <label class="combo w80 off"><select aria-label="Стиль печати" disabled><option>ПоЦвету</option></select></label>
    </div>
  </div>
</div>

<div class="body">
<main class="work">
  <div class="upper">
    <div class="dock">
      <div class="col c1">
        <div class="vstrip h297"><button aria-label="Отрезок"><svg><use href="#line"/></svg></button><button aria-label="Прямая"><svg><use href="#xline"/></svg></button><button aria-label="Полилиния"><svg><use href="#pline"/></svg></button><button aria-label="Многоугольник"><svg><use href="#polygon"/></svg></button><button aria-label="Прямоугольник"><svg><use href="#rect"/></svg></button><button aria-label="Дуга"><svg><use href="#arc"/></svg></button><button aria-label="Круг"><svg><use href="#circle"/></svg></button><button aria-label="Облако"><svg><use href="#cloud"/></svg></button><button aria-label="Сплайн"><svg><use href="#spline"/></svg></button><button aria-label="Эллипс"><svg><use href="#ellipse"/></svg></button><button aria-label="Эллиптическая дуга"><svg><use href="#ellarc"/></svg></button><button aria-label="Вставить блок"><svg><use href="#insert"/></svg></button><button aria-label="Создать блок"><svg><use href="#block"/></svg></button><button aria-label="Точка"><svg><use href="#point"/></svg></button><button aria-label="Штриховка"><svg><use href="#hatch"/></svg></button><button aria-label="Градиент"><svg><use href="#gradient"/></svg></button><button aria-label="Область"><svg><use href="#region"/></svg></button><button aria-label="Таблица"><svg><use href="#table"/></svg></button><button aria-label="Текст"><svg><use href="#mtext"/></svg></button><button aria-label="Добавить"><svg><use href="#addsel"/></svg></button></div>
        <div class="vstrip h73"><button aria-label="Расстояние"><svg><use href="#dist"/></svg></button><button aria-label="Радиус"><svg><use href="#rad"/></svg></button><button aria-label="Угол"><svg><use href="#ang"/></svg></button><button aria-label="Площадь"><svg><use href="#area"/></svg></button><button aria-label="Объем"><svg><use href="#vol"/></svg></button></div>
        <div class="vstrip h92"><button aria-label="На передний план"><svg><use href="#front"/></svg></button><button aria-label="На задний план"><svg><use href="#back"/></svg></button><button aria-label="Перед"><svg><use href="#above"/></svg></button><button aria-label="За"><svg><use href="#under"/></svg></button><hr><button aria-label="Тексты вперед"><svg><use href="#abc"/></svg></button><button aria-label="Штриховки назад"><svg><use href="#hback"/></svg></button></div>
      </div>
      <div class="col">
        <div class="vstrip h297"><button aria-label="Стереть"><svg><use href="#erase"/></svg></button><button aria-label="Копировать"><svg><use href="#mcopy"/></svg></button><button aria-label="Зеркало"><svg><use href="#mirror"/></svg></button><button aria-label="Подобие"><svg><use href="#offset"/></svg></button><button aria-label="Массив"><svg><use href="#array"/></svg></button><button aria-label="Перенести"><svg><use href="#move"/></svg></button><button aria-label="Повернуть"><svg><use href="#rotate"/></svg></button><button aria-label="Масштаб"><svg><use href="#scale"/></svg></button><button aria-label="Растянуть"><svg><use href="#stretch"/></svg></button><button aria-label="Обрезать"><svg><use href="#trim"/></svg></button><button aria-label="Удлинить"><svg><use href="#extend"/></svg></button><button aria-label="Разорвать в точке"><svg><use href="#breakpt"/></svg></button><button aria-label="Разорвать"><svg><use href="#break"/></svg></button><button aria-label="Соединить"><svg><use href="#join"/></svg></button><button aria-label="Фаска"><svg><use href="#chamfer"/></svg></button><button aria-label="Сопряжение"><svg><use href="#fillet"/></svg></button><button aria-label="Плавное соединение"><svg><use href="#blend"/></svg></button><button aria-label="Расчленить"><svg><use href="#explode"/></svg></button><button aria-label="Излом"><svg><use href="#wave"/></svg></button><button aria-label="Копировать вложенные"><svg><use href="#ncopy"/></svg></button></div>
        <div class="vstrip h170"><button aria-label="Выровнять"><svg><use href="#align"/></svg></button><button aria-label="Порядок"><svg><use href="#over"/></svg></button><hr><button aria-label="Правка штриховки"><svg><use href="#ehatch"/></svg></button><button aria-label="Правка полилинии"><svg><use href="#epl"/></svg></button><button aria-label="Правка сплайна"><svg><use href="#espl"/></svg></button><button aria-label="Правка массива"><svg><use href="#earr"/></svg></button><hr><button aria-label="Атрибут"><svg><use href="#att1"/></svg></button><button aria-label="Диспетчер атрибутов"><svg><use href="#att2"/></svg></button><button aria-label="Синхронизация"><svg><use href="#att3"/></svg></button><button aria-label="Извлечение"><svg><use href="#att4"/></svg></button><button aria-label="Кисть"><svg><use href="#brush"/></svg></button></div>
      </div>
    </div>
    <section class="view">
      <div class="viewmid">
        <svg class="model" role="img" aria-label="Чертеж">
        <g transform="translate(-38 -88)">
          <text x="40" y="100" class="t8">[−][Сверху][2D-каркас]</text>
          <!-- sheet frame -->
          <g shape-rendering="crispEdges" fill="none" stroke="#000">
            <path d="M328 111H775.500V427H328z" stroke="#555"/>
            <path d="M349.500 116.500H770.500V421.500H349.500z" stroke-width="3"/>
            <path d="M328 262.500h21M328 331.500h21M333.500 262v69M338.500 262v69M344.500 262v69M333 272.500h16M333 288.500h16M333 310.500h16M336.500 331v90M341.500 331v90M336 357.500h13M336 395.500h13M336 421.500h13" stroke="#333"/>
            <path d="M573.500 421V363.500H770M594.500 363v58M615.500 363v58M631.500 363v58M642.500 363v58M642 373.500h128M642 390.500h128M642 405.500h128M716.500 390v31" stroke-width="3"/>
            <path d="M583.500 363v24M605.500 363v24M732.500 392v13M748.500 392v13" stroke-width="2"/>
            <path d="M573 387h70M717 393h53" stroke-width="6"/>
            <path d="M573 368.500h70M573 373.500h70M573 378.500h70M573 395.500h70M573 400.500h70M573 405.500h70M573 411.500h70M573 415.500h70"/>
            <path d="M632 398h10M632 403h10M632 408h10M632 413h10M632 418h10" stroke-width="3"/>
            <path d="M576 387.500h1M581 387.500h2M586 387.500h6M603 387.500h1M629 387.500h1M633 387.500h8M719 392.500h2M730 392.500h1M736 392.500h2M746 392.500h1M752 392.500h2M765 392.500h4M633 398.500h8M633 403.500h8M633 408.500h8M633 413.500h8M633 418.500h8" stroke="#fff"/>
          </g>
          <g class="t4"><text x="575" y="399">Разраб.</text><text x="575" y="404">Провер.</text><text x="575" y="410">Гл.спец.</text><text x="575" y="415">Н.контр.</text><text x="575" y="420">Утв.</text>
          <text transform="translate(332 329) rotate(-90)">Согласовано</text><text transform="translate(340 355) rotate(-90)">Взам. инв.№</text><text transform="translate(340 389) rotate(-90)">Подп. и дата</text><text transform="translate(340 420) rotate(-90)">Инв.№ подл</text></g>
          <text x="723" y="415" class="t5">ООО "ДОРРОГГИ"</text>
          <!-- cursor -->
          <g shape-rendering="crispEdges"><path d="M488 445.500h65M520.500 413v65" stroke="#444"/><path d="M519 444h3v4h-3z" fill="#666" stroke="#444"/></g>
          <path d="M508.500 434.500h10v10h-10z" stroke="#999" fill="#f4f4f4"/><rect x="511" y="435" width="5" height="8" rx="2" fill="#fff" stroke="#111"/><path d="M511 436h3v3h-3z" fill="#111"/>
          <!-- ucs -->
          <g shape-rendering="crispEdges"><path d="M50.500 565v33.500H84M47.500 595.500h6v6h-6z" stroke="#333"/></g>
          <path d="M51 554l4 4 4-4M55 558v5M86 590l10 8M96 590l-10 8" stroke="#555"/>
          <!-- view cube -->
          <circle cx="1051" cy="143" r="38" fill="#fdfdfd" stroke="none"/>
          <rect x="1034.500" y="125.500" width="34" height="34" fill="#ededed" stroke="#9a9a9a"/><rect x="1041" y="132" width="21" height="21" fill="#e2e2e2" stroke="none"/>
          <text x="1051" y="146" class="vc mid">Верх</text>
          <g class="vl mid"><text x="1051" y="110">С</text><text x="1013" y="148">З</text><text x="1089" y="148">В</text><text x="1051" y="186">Ю</text></g>
          <rect x="1036" y="201" width="30" height="12" fill="#efeff6" stroke="none"/><text x="1038" y="210" class="ms">МСК</text><path d="M1059 206h4" stroke="#ccc"/>
          <!-- navigation bar -->
          <rect x="1082" y="229.500" width="22" height="143" rx="2" fill="#f4f4f4" stroke="#cfcfcf"/>
          <g stroke="#e6e6e6"><circle cx="1093" cy="249" r="6"/><path d="M1088 268l4-3v9m4-9v9h4M1088 280h10v8h-10zM1088 302l8-12m-8 0l10 12M1088 325h10M1092 319v12M1086 343h14M1088 347h10v10h-10z"/></g><path d="M1091 353h2v2h-2z" fill="#bbb" stroke="none"/>
        </g></svg>
        <div class="vscroll"><i class="up"></i><i class="thumb"></i><i class="dn"></i></div>
      </div>
      <div class="layouts">
        <svg class="nav" viewBox="0 0 44 12"><path d="M5 3v6M35 3v6" stroke="#333"/><path d="M9 3v6L6 6zM18 3v6l-4-3zM23 3v6l4-3zM31 3v6l3-3z" fill="#333" stroke="none"/><path d="M10.500 0v12M20.500 0v12M30.500 0v12" stroke="#bbb"/><path d="M39 0l5 12" stroke="#555"/></svg>
        <button class="lay on">Модель</button><button class="lay">Layout1</button>
        <div class="hscroll"><i class="lt"></i><i class="thumb"></i><i class="rt"></i></div>
      </div>
    </section>
  </div>
  <div class="lower">
    <div class="strip w93"><button aria-label="ПСК"><svg><use href="#ucsb"/></svg></button><button aria-label="Слой"><svg><use href="#layerp"/></svg></button><button aria-label="Z"><svg><use href="#ptz"/></svg></button><button aria-label="Линейка"><svg><use href="#rule"/></svg></button><button aria-label="Угол"><svg><use href="#dima"/></svg></button><button aria-label="Размер"><svg><use href="#dimb"/></svg></button></div>
    <div class="strip w181"><button aria-label="Блок"><svg><use href="#refins"/></svg></button><hr><button aria-label="Лист"><svg><use href="#sheetp"/></svg></button><button aria-label="DWG"><svg><use href="#pdwf"/></svg></button><button aria-label="DWF"><svg><use href="#pdwf"/></svg></button><button aria-label="DGN"><svg><use href="#pdgn"/></svg></button><button aria-label="PDF"><svg><use href="#ppdf"/></svg></button><button aria-label="Изображение"><svg><use href="#image"/></svg></button><button aria-label="Облако"><svg><use href="#cloud"/></svg></button><hr><button aria-label="Ссылка"><svg><use href="#markup"/></svg></button><button aria-label="Экспорт"><svg><use href="#export"/></svg></button><hr><button aria-label="Правка ссылки"><svg><use href="#insert"/></svg></button></div>
    <div class="strip w422"><button aria-label="Линейный"><svg><use href="#dlin"/></svg></button><button aria-label="Параллельный"><svg><use href="#dali"/></svg></button><button aria-label="Длина дуги"><svg><use href="#darc"/></svg></button><button aria-label="Ординатный"><svg><use href="#dord"/></svg></button><hr><button aria-label="Радиус"><svg><use href="#circle"/></svg></button><button aria-label="Радиус с изломом"><svg><use href="#djog"/></svg></button><button aria-label="Диаметр"><svg><use href="#ddia"/></svg></button><button aria-label="Угловой"><svg><use href="#dang"/></svg></button><hr><button aria-label="Быстрый"><svg><use href="#dqk"/></svg></button><button aria-label="Базовый"><svg><use href="#dbas"/></svg></button><button aria-label="Цепь"><svg><use href="#dcon"/></svg></button><button aria-label="Интервал"><svg><use href="#dspc"/></svg></button><button aria-label="Разрыв"><svg><use href="#dbrk"/></svg></button><hr><button aria-label="Допуск"><svg><use href="#tol"/></svg></button><button aria-label="Центр"><svg><use href="#cen"/></svg></button><button aria-label="Контроль"><svg><use href="#insp"/></svg></button><button aria-label="Линия с изломом"><svg><use href="#djl"/></svg></button><hr><button aria-label="Правка размера"><svg><use href="#ded"/></svg></button><button aria-label="Правка текста"><svg><use href="#dte"/></svg></button><button aria-label="Обновить"><svg><use href="#dup"/></svg></button><hr><label class="combo w80 ind"><select aria-label="Размерный стиль"><option>STANDARD</option></select></label><button aria-label="Стили"><svg><use href="#dstyle"/></svg></button></div>
    <div class="strip w148"><button aria-label="Видовые экраны"><svg><use href="#vpa"/></svg></button><button aria-label="Один"><svg><use href="#vpb"/></svg></button><button aria-label="Многоугольный"><svg><use href="#vpc"/></svg></button><button aria-label="Объект"><svg><use href="#vpd"/></svg></button><button aria-label="Подрезать"><svg><use href="#vpe"/></svg></button><hr><label class="combo w66 off"><select aria-label="Масштаб" disabled><option></option></select></label></div>
  </div>
  <div class="command">
    <div class="cmdside"><svg viewBox="0 0 12 38"><path d="M2 3h8M2 6h8" stroke="#888" stroke-dasharray="1 1"/><path d="M3 12l5 5M8 12l-5 5" stroke="#fff" stroke-width="2"/><path d="M4 27l5 5" stroke="#eee" stroke-width="2"/><path d="M2 26l2 2 2-2-1-2" stroke="#eee" stroke-width="2"/></svg></div>
    <div class="cmdmain">
      <div class="log"><p>Команда: _insert</p><p>Точка вставки или [Базовая точка/Масштаб/X/Y/Z/ПОворот]:</p></div>
      <label class="entry"><svg viewBox="0 0 12 10"><path d="M1 1h10v8H1z" fill="#ddd" stroke="#bbb"/><path d="M3 3l2 2-2 2M6 7h3"/></svg><i class="dn"></i><input aria-label="Команда" placeholder="Введите команду"></label>
    </div>
  </div>
</main>

<aside class="props">
  <h2>Свойства</h2>
  <div class="pick"><label class="combo"><select aria-label="Выбор"><option>Ничего не выбрано</option></select></label><div class="picks"><button aria-label="Добавить"><svg><use href="#selp"/></svg></button><button aria-label="Выбрать"><svg><use href="#selo"/></svg></button><button aria-label="Быстрый выбор"><svg><use href="#selq"/></svg></button></div></div>
  <div class="groups">
  <section><h3>Общие<i class="up"></i></h3><table>
    <tr><th>Цвет</th><td><span><i class="sw"></i>ПоСлою</span></td></tr><tr><th>Слой</th><td>0</td></tr><tr><th>Тип линий</th><td><span><i class="ln l28"></i>ПоСлою</span></td></tr><tr><th>Масштаб тип...</th><td>1</td></tr><tr><th>Вес линий</th><td><span><i class="ln l28"></i>ПоСлою</span></td></tr><tr><th>Прозрачность</th><td>ПоСлою</td></tr><tr><th>Высота</th><td>0</td></tr></table></section>
  <section><h3>3D-визуализация<i class="up"></i></h3><table>
    <tr><th>Материал</th><td>ПоСлою</td></tr><tr><th>Отображени...</th><td>Отбрасываемая ...</td></tr></table></section>
  <section><h3>Стиль печати<i class="up"></i></h3><table>
    <tr><th>Стиль печати</th><td class="ro">ПоЦвету</td></tr><tr><th>Таблица сти...</th><td>Нет</td></tr><tr><th>Пространств...</th><td class="ro">Модель</td></tr><tr><th>Тип стилей п...</th><td class="ro">Недоступно</td></tr></table></section>
  <section><h3>Вид<i class="up"></i></h3><table>
    <tr><th>Центр X</th><td class="ro">384.46</td></tr><tr><th>Центр Y</th><td class="ro">106.98</td></tr><tr><th>Центр Z</th><td class="ro">0</td></tr><tr><th>Высота</th><td class="ro">491.87</td></tr><tr><th>Ширина</th><td class="ro">1156.48</td></tr></table></section>
  <section><h3>Разное<i class="up"></i></h3><table>
    <tr><th>Масштаб ан...</th><td>1:1</td></tr><tr><th>Знак ПСК ВКЛ</th><td>Да</td></tr><tr><th>Знак ПСК в н...</th><td>Нет</td></tr><tr><th>ПСК в каждо...</th><td>Да</td></tr><tr><th>Имя ПСК</th><td class="ro"></td></tr><tr><th>Визуальный ...</th><td>2D-каркас</td></tr></table></section>
  </div>
  <div class="quickcalc"><svg viewBox="0 0 12 42"><path d="M4 5l6 5M10 5l-6 5" stroke="#111" stroke-width="2"/><path d="M4 17h8v6H4zM4 30h8v6H4z" fill="#111"/><path d="M9 18v4l-3-2zM6 32v3M8 32v3" stroke="#fff" fill="#fff"/></svg><span>БыстрКальк</span><svg class="cc"><use href="#calc"/></svg></div>
</aside>
</div>

<footer class="status">
  <span class="coords">336.13, &nbsp;16.95 , 0.00</span>
  <div class="toggles"><button aria-label="Зависимости"><svg><use href="#s1"/></svg></button><button aria-label="Шаг"><svg><use href="#s2"/></svg></button><button aria-label="Сетка"><svg><use href="#s3"/></svg></button><button class="on" aria-label="Орто"><svg><use href="#s4"/></svg></button><button aria-label="Полярное"><svg><use href="#s5"/></svg></button><button class="on" aria-label="Привязка"><svg><use href="#s6"/></svg></button><button aria-label="3D привязка"><svg><use href="#s7"/></svg></button><button aria-label="Отслеживание"><svg><use href="#s8"/></svg></button><button aria-label="ДПСК"><svg><use href="#s9"/></svg></button><button aria-label="Дин"><svg><use href="#s10"/></svg></button><button class="on" aria-label="Вес"><svg><use href="#s11"/></svg></button><button class="on" aria-label="Прозрачность"><svg><use href="#s12"/></svg></button><button aria-label="Свойства"><svg><use href="#s13"/></svg></button><button aria-label="Циклический выбор"><svg><use href="#s14"/></svg></button><button aria-label="Монитор"><svg><use href="#s15"/></svg></button></div>
  <div class="sright">
    <button class="mdl">МОДЕЛЬ</button><button aria-label="Лист"><svg><use href="#m1"/></svg></button><button aria-label="Листы"><svg><use href="#m2"/></svg></button><i class="gap"></i>
    <button class="sc"><svg><use href="#ann"/></svg>1:1<i class="dn"></i></button><button aria-label="Видимость аннотаций"><svg><use href="#annl"/></svg></button><button aria-label="Автомасштаб"><svg><use href="#ann"/></svg></button><i class="gap thin"></i>
    <button aria-label="Рабочее пространство"><svg><use href="#gear"/></svg></button><button aria-label="Блокировка"><svg><use href="#lock"/></svg></button><button aria-label="Изоляция"><svg><use href="#ball"/></svg></button><button class="hot" aria-label="Производительность"><svg><use href="#perf"/></svg></button><button class="hot" aria-label="Подсветка"><svg><use href="#bulb"/></svg></button><i class="dn fill"></i><button class="clean" aria-label="Очистить экран"><svg><use href="#win"/></svg></button>
  </div>
</footer>

<div class="taskbar">
  <button class="orb" aria-label="Пуск"><svg viewBox="0 0 28 18"><circle cx="14" cy="10" r="11" fill="#2c6a9c" stroke="#9bc3dd"/><path d="M9 5q2-1 4 0v4q-2-1-4 0z" fill="#ea6b3c" stroke="none"/><path d="M14 5q3 2 5 1v4q-2 1-5-1z" fill="#a5cf4f" stroke="none"/><path d="M9 10q2-1 4 0v4q-2-1-4 0z" fill="#63b1e8" stroke="none"/><path d="M14 10q3 2 5 1v4q-2 1-5-1z" fill="#f5ce48" stroke="none"/></svg></button>
  <button class="task" aria-label="Internet Explorer"><svg viewBox="0 0 16 14"><path d="M12 9a5 5 0 1 1 0-4H5" stroke="#6cc4f0" stroke-width="2"/><path d="M1 12C4 5 9 2 15 2" stroke="#f2c94c"/></svg></button>
  <button class="task lit" aria-label="Проводник"><svg viewBox="0 0 16 14"><path d="M2 3h5l1 1h6v8H2z" fill="#f5e19b" stroke="#c9ad55"/><path d="M4 8h8v3H4z" fill="#8fc2e3" stroke="none"/></svg></button>
  <button class="task lit dim" aria-label="Проигрыватель"><svg viewBox="0 0 16 14"><path d="M3 2h10v10H3z" fill="#ef9a2e" stroke="#f7c77e"/><path d="M6 4v6l5-3z" fill="#fff" stroke="none"/></svg></button>
  <button class="task lit" aria-label="Firefox"><svg viewBox="0 0 16 14"><circle cx="8" cy="7" r="5" fill="#e76a21" stroke="#b8460f"/><circle cx="8" cy="6" r="3" fill="#3a62a8" stroke="none"/></svg></button>
  <button class="task" aria-label="Chrome"><svg viewBox="0 0 16 14"><circle cx="8" cy="7" r="5" fill="#e8b93a" stroke="none"/><path d="M3 6a5 5 0 0 1 10 0z" fill="#d9412f" stroke="none"/><path d="M3 6l4 6A5 5 0 0 1 3 6z" fill="#4ba34a" stroke="none"/><circle cx="8" cy="7" r="2" fill="#4b86d9" stroke="#fff"/></svg></button>
  <button class="task" aria-label="Дискета"><svg viewBox="0 0 16 14"><path d="M3 2h10v10H3z" fill="#3654c0" stroke="#223a94"/><path d="M5 2h6v3H5zM5 8h6v4H5z" fill="#fff" stroke="none"/></svg></button>
  <button class="task cad" aria-label="AutoCAD"><svg viewBox="0 0 16 14"><path d="M2 13L7 1h3l4 12-5-2z" fill="#c7241a" stroke="none"/><path d="M7 10l2-5 1 5z" fill="#fff" stroke="none"/></svg></button>
  <button class="task lit" aria-label="Запись"><svg viewBox="0 0 16 14"><path d="M2 6l6-3 6 2-4 6-6-1z" fill="#aab4ba"/><path d="M4 5l7 1" stroke="#eee"/></svg></button>
  <div class="tray"><span>RU</span><i class="up"></i><svg viewBox="0 0 14 14"><path d="M3 2v11" stroke="#fff" stroke-width="2"/><path d="M5 3h4l1 1h3v4H9L8 7H5z" fill="#fff" stroke="none"/></svg><svg viewBox="0 0 14 14"><path d="M4 3h9v7H4zM7 12h5M2 2v6" stroke="#eee"/></svg><svg viewBox="0 0 14 14"><path d="M1 5h3l3-3v10L4 9H1z" fill="#fff" stroke="none"/><path d="M9 5q1 2 0 4M11 3q2 4 0 8" stroke="#eee"/></svg><time>8:40</time></div>
  <i class="peek"></i>
</div>
</div>
</body>
</html>
```
FILE: styles.css
```css
* { box-sizing: border-box; }
body { margin: 0; font: 8px/12px "Open Sans", "Noto Sans", sans-serif; color: #111; }
button, input, select { font: inherit; color: inherit; background: none; border: 0; padding: 0; margin: 0; }
button { display: flex; align-items: center; justify-content: center; flex: none; white-space: nowrap; }
svg { flex: none; width: 14px; height: 14px; fill: none; stroke: #5c5c5c; display: block; }
.sprite { position: absolute; width: 0; height: 0; }
i { flex: none; display: block; font-style: normal; }
.dn { border: 3px solid transparent; border-top-color: #111; border-bottom: 0; width: 6px; height: 3px; }
.up { border: 3px solid transparent; border-bottom-color: #111; border-top: 0; width: 6px; height: 3px; }
.rt { border: 3px solid transparent; border-left: 4px solid #111; border-right: 0; width: 4px; height: 6px; }
.lt { border: 3px solid transparent; border-right: 4px solid #333; border-left: 0; width: 4px; height: 6px; }
.sw { width: 7px; height: 7px; background: #000; margin: 0 2px; }
.ln { height: 1px; background: #333; margin: 0 3px; }
.l24 { width: 24px; } .l28 { width: 28px; } .l40 { width: 41px; }

.app { display: flex; flex-direction: column; height: 100vh; min-height: 700px; overflow: hidden; background: #5d5d5d; }

.head { display: flex; height: 29px; background: #8b8b8b; }
.logo { width: 26px; height: 28px; background: linear-gradient(#a9a9a9, #858585); border-right: 1px solid #555; border-bottom: 1px solid #555; }
.logo svg { width: 26px; height: 28px; }
.headrows { flex: 1; min-width: 0; display: flex; flex-direction: column; }
.title { display: flex; align-items: center; height: 14px; background: linear-gradient(#aaa, #8c8c8c); }
.quick { display: flex; align-items: center; justify-content: space-between; width: 130px; padding: 0 2px 0 4px; margin-right: 4px; }
.quick svg, .service svg { width: 13px; height: 13px; }
.quick .dn { border-top-color: #333; border-left-width: 2px; border-right-width: 2px; width: 4px; }
.combo { display: flex; align-items: center; height: 15px; padding: 0 2px 0 3px; border: 1px solid #aaa; background: linear-gradient(#f5f5f5, #d5d5d5); flex: none; }
.combo select { flex: 1; min-width: 0; appearance: none; height: 12px; padding: 0 1px; }
.combo::after { content: ""; border: 3px solid transparent; border-top: 4px solid #111; border-bottom: 0; }
.combo.ind { padding-left: 11px; }
.combo.off { background: #f4f4f4; color: #999; padding-left: 6px; border-color: #ddd; }
.combo.off::after { border-top-color: #999; }
.combo.off select { opacity: 1; }
.wspace { width: 119px; height: 14px; padding-left: 0; background: linear-gradient(#ddd, #bdbdbd); }
.wspace svg { width: 11px; height: 11px; }
.more { margin: 0 2px; }
.caption { flex: 1; height: 14px; display: flex; justify-content: center; gap: 10px; padding: 1px 0 0 4px;
  background: radial-gradient(ellipse 26px 12px at 143px 4px, #1d4a86, #4b78a8 50%, transparent), linear-gradient(90deg, #f4f6f8, #fff 25%, #fdfdfd 75%, #e9fafb 80%, #fff 84%, #e0f8fa 90%, #fff); }
.title > .rt { margin: 0 3px 0 4px; }
.search { width: 120px; height: 13px; background: #fff; font-style: italic; padding: 0 1px; border: 1px solid #999; }
::placeholder { color: #777; opacity: 1; }
.service { width: 169px; display: flex; align-items: center; justify-content: space-between; padding: 0 3px; color: #fff; }
.service .dn { border-left-width: 2px; border-right-width: 2px; width: 4px; border-top-color: #333; }
.login { gap: 2px; }
.qhelp { margin-left: 8px; }
.winbtn { width: 79px; height: 14px; background: #c6f2f6; display: flex; justify-content: flex-end; padding: 0 0 4px 10px; }
.winbtn button { width: 18px; height: 10px; border: 1px solid #8fb0b8; border-top: 0; background: #d7f6f9; }
.winbtn .wide { width: 34px; }
.winbtn svg { width: 12px; height: 9px; stroke: #667; }
.menu { flex: 1; display: flex; align-items: center; gap: 14px; padding: 0 2px 0 9px; color: #f2f2f2; background: linear-gradient(#888, #6b6b6b 60%, #5e5e5e); border-top: 1px solid #666; }
.mdi { width: 28px; height: 10px; margin-left: auto; }

.tabs { height: 18px; display: grid; grid-template-columns: 8px 98px auto; align-items: end; background: linear-gradient(#8a8a8a, #9b9b9b); }
.tabshape { grid-area: 1 / 2; width: 110px; height: 15px; }
.tab { grid-area: 1 / 2; height: 15px; justify-content: space-between; padding: 0 18px 0 11px; }
.tab b { font-weight: 400; font-size: 10px; color: #777; }
.plus { grid-area: 1 / 3; justify-self: start; height: 15px; margin-left: -8px; }
.plus svg { width: 16px; height: 12px; }

.bars { padding: 3px 5px 4px; display: flex; flex-direction: column; gap: 3px; border-bottom: 1px solid #777; }
.barrow { display: flex; gap: 7px; }
.strip { display: flex; align-items: center; justify-content: space-between; height: 15px; background: linear-gradient(#f3f3f3, #e6e6e6); flex: none; }
.strip > button:first-child { margin-left: 1px; }
.strip hr { width: 2px; height: 13px; margin: 0 1px; border: 0; border-left: 1px solid #999; background: #fff; flex: none; }
.strip .dn { border-left-width: 2px; border-right-width: 2px; width: 4px; border-top-color: #444; }
.w425 { width: 425px; } .w158 { width: 158px; } .w395 { width: 395px; } .w146 { width: 146px; } .w264 { width: 264px; }
.w93 { width: 93px; } .w181 { width: 181px; } .w422 { width: 422px; } .w148 { width: 148px; }
.w80 { width: 80px; } .w114 { width: 114px; } .w200 { width: 200px; } .w100 { width: 99px; } .w107 { width: 107px; } .w83 { width: 83px; } .w66 { width: 66px; }
.combo.w200 { padding-left: 0; }
.w200 svg { width: 11px; height: 11px; }

.body { flex: 1; min-height: 0; display: flex; }
.work { flex: 1; min-width: 0; display: flex; flex-direction: column; }
.upper { flex: 1; min-height: 0; display: flex; }
.dock { width: 37px; flex: none; display: flex; gap: 3px; padding-top: 1px; }
.col { width: 17px; display: flex; flex-direction: column; gap: 7px; }
.c1 { width: 14px; }
.vstrip { display: flex; flex-direction: column; align-items: center; justify-content: space-between; background: #ececec; padding: 3px 0 0; border-right: 1px solid #bbb; }
.c1 .vstrip { align-items: flex-end; overflow: hidden; padding-right: 2px; }
.vstrip svg { width: 13px; height: 13px; }
.vstrip hr { width: 13px; height: 1px; border: 0; background: #aaa; margin: 1px 0; flex: none; }
.h297 { height: 297px; } .h73 { height: 73px; } .h92 { height: 92px; } .h170 { height: 170px; }

.view { flex: 1; min-width: 0; display: flex; flex-direction: column; border-left: 1px solid #888; margin-right: 3px; background: #fff; }
.viewmid { flex: 1; min-height: 0; display: flex; }
.model { flex: 1; min-width: 0; width: auto; height: 100%; }
.model text { stroke: none; fill: #222; }
.t8 { font-size: 8px; }
.t5 { font: italic 5px "Liberation Sans", sans-serif; }
.t4 { font: italic 4px "Liberation Sans", sans-serif; }
.mid { text-anchor: middle; }
.model .vc { font-size: 9px; fill: #888; }
.model .vl text { font: bold 13px "Open Sans", sans-serif; fill: #c8c8c8; }
.model .ms { font-size: 7px; fill: #99a; }
.vscroll { width: 12px; background: #f0f0f0; display: flex; flex-direction: column; align-items: center; justify-content: space-between; padding: 4px 0; }
.vscroll .thumb { width: 10px; height: 10px; margin-top: 87px; }
.thumb { border: 1px solid #aaa; background: #ddd; width: 11px; height: 10px; }
.vscroll .up, .vscroll .dn { border-left-width: 2px; border-right-width: 2px; width: 4px; }
.layouts { height: 13px; display: flex; background: #ececec; border-top: 1px solid #888; }
.nav { width: 44px; height: 12px; }
.lay { display: flex; height: 12px; padding-left: 4px; }
.lay::after { content: ""; width: 1px; height: 12px; margin: 0 3px 0 5px; background: #666; transform: skewX(-20deg); }
.lay.on { background: #fff; }
.lay.on + .lay { padding-left: 0; }
.hscroll { margin-left: auto; width: 35%; display: flex; align-items: center; justify-content: space-between; padding: 0 16px 0 7px; background: #f2f2f2; border-left: 1px solid #bbb; }
.hscroll .thumb { margin-left: 166px; }

.lower { display: flex; gap: 8px; height: 24px; padding: 4px 0 0 40px; }
.command { display: flex; height: 38px; margin-right: 3px; }
.cmdside { width: 13px; background: #4f4f4f; }
.cmdside svg { width: 12px; height: 38px; }
.cmdmain { flex: 1; display: flex; flex-direction: column; }
.log { height: 24px; background: #c6c6c6; font: 8px/10px "DejaVu Sans Mono", monospace; padding: 2px 2px 0; border-bottom: 1px solid #999; }
.log p { margin: 0; }
.entry { flex: 1; display: flex; align-items: center; gap: 2px; background: #fff; padding-left: 3px; }
.entry svg { width: 12px; height: 10px; stroke: #888; }
.entry .dn { border-left-width: 2px; border-right-width: 2px; width: 4px; border-top-color: #777; }
.entry input { flex: 1; font: italic 8px/10px "DejaVu Sans Mono", monospace; padding-left: 1px; }

.props { width: 158px; flex: none; position: relative; background: #eee; border-left: 1px solid #fff; margin-bottom: 1px; }
.props h2 { margin: 0; height: 14px; padding-left: 5px; font-size: 8px; line-height: 14px; font-weight: 400; background: #9d9d9d; border-left: 2px solid #666; }
.pick { display: flex; align-items: center; justify-content: space-between; padding: 7px 4px 3px 5px; }
.pick .combo { width: 96px; border-color: #888; padding-left: 1px; }
.picks { display: flex; }
.picks button { width: 16px; height: 16px; border: 1px solid #ccc; }
.groups { display: flex; flex-direction: column; gap: 2px; padding: 1px 11px 0 6px; }
.groups h3 { display: flex; align-items: center; justify-content: space-between; margin: 0; height: 12px; padding: 0 6px 0 3px; font-size: 8px; line-height: 12px; background: linear-gradient(#b5b5b5, #999); }
.groups table { width: calc(100% - 12px); margin-left: 12px; table-layout: fixed; border-collapse: collapse; }
.groups tr { height: 13px; }
.groups tr:nth-child(4n) { height: 12px; }
.groups th, .groups td { border: 1px solid #b0b0b0; padding: 0 0 0 2px; line-height: 11px; font-weight: 400; text-align: left; white-space: nowrap; }
.groups th { width: 59px; }
.groups td { background: #fff; padding-left: 1px; }
.groups td.ro { background: #eee; }
.groups td span { display: flex; align-items: center; }
.groups td .sw { margin: 0 4px 0 1px; }
.groups td .ln { margin-left: 2px; }
.quickcalc { position: absolute; right: 0; bottom: 41px; width: 12px; height: 116px; background: #c9c9c9; border: 1px solid #888; border-right: 0; border-radius: 3px 0 0 3px; display: flex; flex-direction: column; align-items: center; }
.quickcalc svg { width: 12px; height: 42px; }
.quickcalc .cc { width: 10px; height: 10px; margin: 4px 0 2px; }
.quickcalc span { writing-mode: vertical-rl; transform: rotate(180deg); flex: 1; text-align: left; line-height: 10px; }

.status { height: 17px; display: flex; align-items: center; background: linear-gradient(#999, #7e7e7e); border-top: 1px solid #333; border-bottom: 1px solid #555; }
.coords { width: 97px; padding-left: 6px; font-family: "Liberation Sans", sans-serif; }
.toggles, .sright { display: flex; height: 15px; }
.toggles { width: 220px; }
.toggles button { flex: 1; min-width: 0; border: 1px solid #888; border-left-color: #bbb; background: #b5b5b5; }
.toggles svg, .sright svg { width: 12px; height: 12px; stroke: #444; }
.toggles .on { background: #b8dcec; }
.sright { margin-left: auto; background: #acacac; align-items: center; }
.sright button { width: 15px; height: 15px; border-right: 1px solid #888; }
.sright .mdl { width: 36px; font-family: "Liberation Sans", sans-serif; }
.sright .sc { width: 34px; gap: 1px; }
.sright .hot { background: #8d8d8d; }
.sright .clean { width: 13px; border: 0; }
.sright .dn { border-left-width: 2px; border-right-width: 2px; width: 4px; }
.gap { width: 8px; height: 15px; background: #7d7d7d; }
.gap.thin { width: 4px; }
.sright .fill { margin: 0 4px; }

.taskbar { height: 18px; display: flex; align-items: stretch; overflow: hidden; color: #fff; border-top: 1px solid #8a97a5;
  background:
    linear-gradient(90deg, #3c4c5d, #435466 22%, transparent 30%, transparent 80%, #27333f 90%),
    radial-gradient(ellipse 50px 7px at 510px 5px, #1e2f44, transparent),
    radial-gradient(ellipse 40px 8px at 440px 14px, #26374b, transparent),
    radial-gradient(ellipse 60px 6px at 600px 4px, #7d9cc0, transparent),
    radial-gradient(ellipse 50px 6px at 690px 13px, #2b3e54, transparent),
    radial-gradient(ellipse 70px 5px at 760px 8px, #7895b5, transparent),
    radial-gradient(ellipse 70px 6px at 870px 14px, #22303f, transparent),
    radial-gradient(ellipse 50px 5px at 930px 5px, #6c87a2, transparent),
    radial-gradient(ellipse 80px 6px at 1030px 12px, #1e2a38, transparent),
    linear-gradient(#587291, #607b9b 60%, #42566d); }
.orb { width: 37px; padding-right: 5px; }
.orb svg { width: 28px; height: 18px; }
.task { width: 31px; border-right: 1px solid transparent; }
.task svg { width: 16px; height: 14px; }
.lit { background: linear-gradient(#a9b8c6, #71818f); border: 1px solid #9dacba; border-bottom: 0; }
.dim { background: linear-gradient(#75869a, #4e6072); }
.cad { background: linear-gradient(#f3e3e3, #d8cfd2); }
.tray { margin-left: auto; width: 136px; display: flex; align-items: center; gap: 4px; }
.tray svg { width: 12px; height: 12px; }
.tray .up { border-bottom-color: #fff; margin: 0 4px; }
.tray time { margin-left: 16px; }
.peek { width: 5px; background: #55626f; border-left: 1px solid #8b98a4; }
```
